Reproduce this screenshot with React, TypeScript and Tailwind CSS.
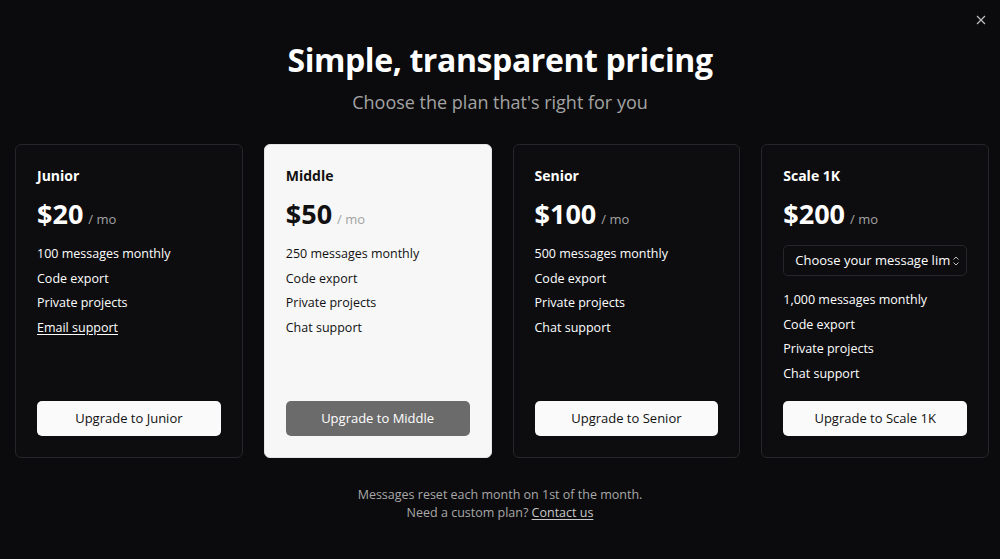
import React from 'react'

const plans = [
  {
    name: 'Junior',
    price: '$20',
    features: ['100 messages monthly', 'Code export', 'Private projects', 'Email support'],
    underlineLast: true,
  },
  {
    name: 'Middle',
    price: '$50',
    features: ['250 messages monthly', 'Code export', 'Private projects', 'Chat support'],
    featured: true,
  },
  {
    name: 'Senior',
    price: '$100',
    features: ['500 messages monthly', 'Code export', 'Private projects', 'Chat support'],
  },
  {
    name: 'Scale 1K',
    price: '$200',
    features: ['1,000 messages monthly', 'Code export', 'Private projects', 'Chat support'],
    select: true,
  },
]

const App = () => {
  return (
    <div
      className="relative w-[1000px] h-[559px] bg-[#0b0b0d] text-white overflow-hidden"
      style={{ fontFamily: '"Open Sans", "Noto Sans", sans-serif' }}
    >
      <button className="absolute top-[15px] right-[14px] text-[#bdbdbd] leading-none">
        <svg width="10" height="10" viewBox="0 0 10 10" fill="none" stroke="currentColor" strokeWidth="1.2">
          <path d="M1 1l8 8M9 1l-8 8" />
        </svg>
      </button>

      <div className="flex flex-col items-center pt-[38px]">
        <h1 className="text-[32px] leading-[44px] font-bold tracking-[-0.4px]">Simple, transparent pricing</h1>
        <p className="mt-[7px] text-[18px] leading-[26px] text-[#a3a3a3]">Choose the plan that's right for you</p>
      </div>

      <div className="grid grid-cols-4 gap-[21px] pl-[15px] pr-[11px] mt-[29px]">
        {plans.map((plan) => (
          <div
            key={plan.name}
            className={`flex flex-col h-[314px] rounded-[6px] border px-[21px] pt-[20px] pb-[21px] ${
              plan.featured ? 'bg-[#f7f7f7] border-[#e5e5e5] text-[#111]' : 'bg-[#0d0d10] border-[#26262a] text-white'
            }`}
          >
            <h3 className="text-[14px] leading-[22px] font-bold">{plan.name}</h3>
            <div className="flex items-baseline gap-[5px] mt-[9px]">
              <span className="text-[27px] leading-[36px] font-bold">{plan.price}</span>
              <span className="text-[13px] text-[#a3a3a3]">/ mo</span>
            </div>
            {plan.select && (
              <div className="mt-[13px] mb-[8px] flex items-center justify-between h-[31px] rounded-[5px] border border-[#26262a] pl-[11px] pr-[6px] text-[13px]">
                <span className="whitespace-nowrap overflow-hidden">Choose your message lim</span>
                <svg width="8" height="12" viewBox="0 0 8 12" fill="none" stroke="#bdbdbd" strokeWidth="1">
                  <path d="M1.5 4.5L4 2l2.5 2.5M1.5 7.5L4 10l2.5-2.5" />
                </svg>
              </div>
            )}
            <ul className={`${plan.select ? 'mt-[4px]' : 'mt-[10px]'} flex flex-col text-[12.5px] leading-[24.5px]`}>
              {plan.features.map((f, i) => (
                <li key={f} className={plan.underlineLast && i === plan.features.length - 1 ? 'underline underline-offset-2' : ''}>
                  {f}
                </li>
              ))}
            </ul>
            <button
              className={`mt-auto h-[35px] w-full rounded-[5px] text-[13px] ${
                plan.featured ? 'bg-[#6b6b6b] text-white' : 'bg-[#fafafa] text-[#111]'
              }`}
            >
              Upgrade to {plan.name}
            </button>
          </div>
        ))}
      </div>

      <div className="mt-[28px] text-center text-[12.5px] leading-[18px] text-[#a8a8a8]">
        <p>Messages reset each month on 1st of the month.</p>
        <p>
          Need a custom plan? <a className="underline underline-offset-2 text-[#c8c8c8]">Contact us</a>
        </p>
      </div>
    </div>
  )
}

export default App
